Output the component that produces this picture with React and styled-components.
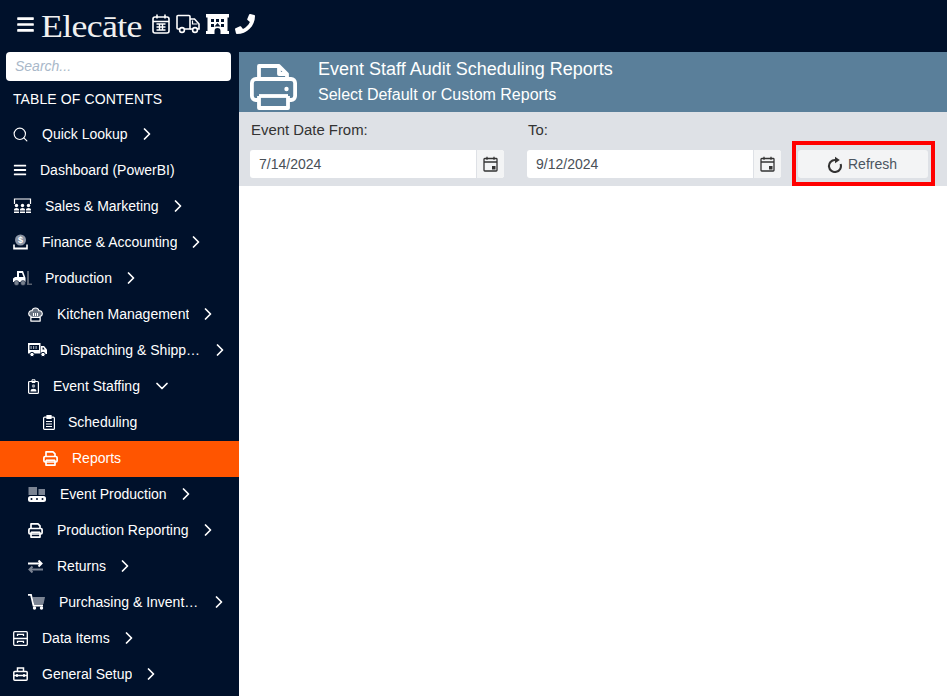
import React from "react";
import styled, { createGlobalStyle } from "styled-components";
import { FaBars, FaPhone } from "react-icons/fa";
import { Search, ChevronRight, ChevronDown } from "lucide-react";

const Navy = "#00112b";

const Global = createGlobalStyle`
  html, body { margin: 0; padding: 0; height: 100%; background: #fff; overflow: hidden; }
  body { font-family: "Liberation Sans", Arial, sans-serif; }
  #root { height: 100%; }
`;

const Page = styled.div`
  width: 947px; height: 696px; display: grid;
  grid-template-columns: 239px 1fr; grid-template-rows: 52px 1fr;
  overflow: hidden; background: #fff;
`;
const TopBar = styled.header`
  grid-column: 1 / 3; background: ${Navy}; color: #fff;
  display: flex; align-items: center; padding: 0 0 4px 16px; box-sizing: border-box;
`;
const MenuBtn = styled.span`display: flex; width: 25px;`;
const Logo = styled.span`
  display: inline-block; font-family: "Liberation Serif", serif; font-size: 32px; letter-spacing: -0.6px;
  width: 111px; line-height: 32px; color: #f0f0f0; margin-top: 3px;
  transform: scaleX(1.12); transform-origin: left center;
`;
const TopIcons = styled.div`display: flex; align-items: center;`;
const TopIcon = styled.span`display: flex; margin-right: ${p => p.$gap}px;`;

const Sidebar = styled.nav`
  background: ${Navy}; color: #fff; display: flex; flex-direction: column; min-height: 0; overflow: hidden;
`;
const SearchBox = styled.div`
  height: 29px; margin: 0 8px 0 6px; background: #fff; border-radius: 4px;
  display: flex; align-items: center; padding: 0 0 2px 9px; box-sizing: border-box;
  font-size: 14px; font-style: italic; color: #a9b8c9; flex: none;
`;
const TocTitle = styled.div`
  height: 36px; line-height: 36px; padding-left: 13px; font-size: 14px; flex: none; letter-spacing: 0.1px;
`;
const Row = styled.div`
  height: 36px; flex: none; display: flex; align-items: center; box-sizing: border-box;
  padding: 0 0 2px ${p => p.$indent}px; font-size: 14px; color: #fff;
  background: ${p => (p.$active ? "#ff5500" : "transparent")};
`;
const IconSlot = styled.span`
  width: ${p => p.$w}px; flex: none; display: flex; align-items: center;
`;
const Label = styled.span`
  white-space: nowrap; overflow: hidden; text-overflow: ellipsis; max-width: 141px;
`;
const Caret = styled.span`display: flex; margin-left: ${p => (p.$open ? 12 : 9)}px;`;

const Main = styled.main`display: flex; flex-direction: column; min-width: 0; background: #fff;`;
const Banner = styled.div`
  height: 60px; background: #5a7f9a; color: #fff; display: flex; align-items: flex-start; padding: 7px 0 0 11px;
  flex: none; box-sizing: border-box;
`;
const BannerIcon = styled.span`display: flex; width: 68px; margin-top: 5px;`;
const BannerText = styled.div`display: flex; flex-direction: column; gap: 4px;`;
const BannerTitle = styled.div`font-size: 18px; line-height: 21px;`;
const BannerSub = styled.div`font-size: 16px; line-height: 21px;`;

const Filters = styled.div`
  height: 74px; background: #dee1e6; display: flex; align-items: flex-end; padding-left: 11px; flex: none;
`;
const Field = styled.div`
  width: 254px; margin-right: 23px; padding-bottom: 8px; color: #333;
`;
const FieldLabel = styled.div`height: 38px; line-height: 36px; font-size: 14.9px; padding-left: 1px;`;
const InputGroup = styled.div`
  height: 28px; display: flex; background: #fff; border-radius: 3px; overflow: hidden; align-items: stretch;
`;
const DateValue = styled.div`flex: 1; padding-left: 9px; line-height: 28px; color: #495057; font-size: 14px;`;
const Addon = styled.div`
  width: 27px; background: #f3f4f5; border-left: 1px solid #dee1e6; display: flex; align-items: center; justify-content: center;
`;
const Highlight = styled.div`
  margin-left: -12px; width: 143px; height: 45px; box-sizing: border-box; border: 4px solid #f00;
  padding: 5px 3px 4px 2px; display: flex;
`;
const RefreshBtn = styled.div`
  flex: 1; background: #f3f4f5; border-radius: 3px; color: #4a5560; font-size: 14px;
  display: flex; align-items: center; justify-content: center; gap: 5px; padding-right: 2px;
`;

const Calendar = () => (
  <svg width="15" height="16" viewBox="0 0 15 16" fill="none" stroke="#333" strokeWidth="1.3">
    <rect x="1" y="2.500" width="13" height="12.500" rx="0.800" />
    <path d="M1 6h13M4 .8v3M11 .8v3" />
    <rect x="9" y="10" width="3.500" height="3.500" fill="#333" stroke="none" />
  </svg>
);
const RefreshIcon = () => (
  <svg width="16" height="17" viewBox="0 0 16 17" fill="none">
    <path d="M8 4A6 6 0 1 0 13.600 8" stroke="#333" strokeWidth="2.100" />
    <path d="M8 .8v6.400l4.800-3.200z" fill="#333" />
  </svg>
);

const TopCalendar = () => (
  <svg width="18" height="20" viewBox="0 0 18 20" fill="none" stroke="#fff" strokeWidth="1.6">
    <rect x="1" y="3" width="16" height="16" rx="2" />
    <path d="M5 .5v4M13 .5v4M1 7.500h16" />
    <path d="M4.500 10h9M4.500 13h9M4.500 16h9M7.500 9.500v7M10.500 9.500v7" strokeWidth="1.400" />
  </svg>
);
const TopTruck = () => (
  <svg width="24" height="20" viewBox="0 0 24 20" fill="none" stroke="#fff" strokeWidth="1.6">
    <path d="M4 15H2a1 1 0 0 1-1-1V2.500a1 1 0 0 1 1-1h11a1 1 0 0 1 1 1V15H8.500" />
    <path d="M14 5h4.500l4.500 5v5h-2M14 15h3" />
    <path d="M16.500 6.500v3.500h5" strokeWidth="1.200" />
    <circle cx="6" cy="16" r="2.400" /><circle cx="19" cy="16" r="2.400" />
  </svg>
);
const TopBuilding = () => (
  <svg width="23" height="20" viewBox="0 0 23 20" fill="#fff">
    <path d="M0 0h23v3.500h-1.500V17H23v3H14.500v-3a3 3 0 0 0-6 0v3H0v-3h1.500V3.500H0z" />
    <g fill={Navy}>
      <rect x="5" y="5" width="3" height="3" /><rect x="10" y="5" width="3" height="3" /><rect x="15" y="5" width="3" height="3" />
      <rect x="5" y="10" width="3" height="3" /><rect x="15" y="10" width="3" height="3" />
      <path d="M11.500 9l3 3.500h-6z" />
    </g>
  </svg>
);

const Sales = () => (
  <svg width="19" height="16" viewBox="0 0 19 16" fill="none" stroke="#fff" strokeWidth="1.200">
    <path d="M1.500 6V1h16v5" />
    <g fill="#fff" stroke="none">
      <circle cx="3.500" cy="7.500" r="1.700" /><circle cx="9.500" cy="7.500" r="1.700" /><circle cx="15.500" cy="7.500" r="1.700" />
      <path d="M1 15v-3.500q0-1.500 2.500-1.500t2.500 1.500V15zM7 15v-3.500q0-1.500 2.500-1.500t2.500 1.500V15zM13 15v-3.500q0-1.500 2.500-1.500t2.500 1.500V15z" />
    </g>
    <path d="M0 13h19" stroke={Navy} strokeWidth="1" />
  </svg>
);
const Finance = () => (
  <svg width="15" height="16" viewBox="0 0 15 16">
    <circle cx="7.500" cy="6" r="5.500" fill="#8b95a5" />
    <text x="7.500" y="9" fontSize="9" fontWeight="700" textAnchor="middle" fill="#fff" fontFamily="Liberation Sans">$</text>
    <path d="M.2 10.500v5h14.600v-5h-1.600v3H1.800v-3z" fill="#fff" />
  </svg>
);
const Forklift = () => (
  <svg width="19" height="16" viewBox="0 0 19 16">
    <path d="M0 8.500l2-1.500h2V1h6l2.500 7v4H0z" fill="#fff" />
    <path d="M6 3h3l1.500 4H6z" fill={Navy} />
    <circle cx="3.500" cy="13" r="2.500" fill="#77808e" stroke={Navy} strokeWidth=".5" />
    <circle cx="10" cy="13" r="2.500" fill="#77808e" stroke={Navy} strokeWidth=".5" />
    <path d="M14 1h2v12.500h3V15h-5z" fill="#59616f" />
  </svg>
);
const ChefIcon = () => (
  <svg width="15" height="15" viewBox="0 0 15 15">
    <path d="M3 9.500C1 9 .5 7.500.8 6 1.200 4 3 3.500 4 3.800 4.500 1.800 6 1 7.500 1s3 .8 3.500 2.800c1-.3 2.800.2 3.200 2.200.3 1.500-.2 3-2.200 3.500V14H3z"
      fill="#6a7482" stroke="#fff" strokeWidth="1.100" />
    <path d="M3 10.300h9M5.500 6v3M7.500 6v3M9.500 6v3" stroke="#fff" strokeWidth="1" fill="none" />
    <rect x="3" y="10.500" width="9" height="3.500" fill={Navy} stroke="#fff" strokeWidth="1" />
  </svg>
);
const DeliveryTruck = () => (
  <svg width="19" height="14" viewBox="0 0 19 14">
    <path d="M0 0h12.500v10.500H0z" fill="#fff" />
    <path d="M1.500 2h9.500v5H1.500z" fill={Navy} />
    <path d="M2.500 3h1.200v3H2.500zM5 3h1.200v3H5zM7.500 3h1.200v3H7.500z" fill="#9ca5b2" />
    <path d="M13 3h3l3 3.500V11h-6z" fill="#fff" />
    <path d="M14.500 4.500h1l1.200 2h-2.200z" fill={Navy} />
    <circle cx="4" cy="11.500" r="2.200" fill="#fff" stroke={Navy} />
    <circle cx="15" cy="11.500" r="2.200" fill="#fff" stroke={Navy} />
  </svg>
);
const Badge = () => (
  <svg width="11" height="15" viewBox="0 0 11 15" fill="none">
    <rect x=".6" y="2.500" width="9.800" height="11.900" rx="1" stroke="#fff" strokeWidth="1.200" />
    <path d="M4 .8h3v2.700H4z" stroke="#fff" strokeWidth="1" />
    <circle cx="5.500" cy="7" r="1.700" fill="#9ca5b2" />
    <path d="M2.500 12.500c0-2 1.200-2.700 3-2.700s3 .7 3 2.700z" fill="#fff" />
  </svg>
);
const ClipboardIcon = () => (
  <svg width="12" height="15" viewBox="0 0 12 15" fill="none" stroke="#fff" strokeWidth="1.200">
    <rect x=".6" y="2.200" width="10.800" height="12.200" rx="1" />
    <path d="M4 .6h4v2.800H4z" fill="#fff" />
    <path d="M3 6.500h6M3 9h6M3 11.500h6" />
  </svg>
);
const PrinterIcon = () => (
  <svg width="15" height="15" viewBox="0 0 15 15" fill="none" stroke="#fff" strokeWidth="1.700" strokeLinejoin="round">
    <path d="M3 5.500V.9h7l2 2v2.600" />
    <rect x=".9" y="5.500" width="13.200" height="5.500" rx="1.200" />
    <path d="M3 9.300v4.800h9V9.300" />
    <path d="M3 9.300h9" />
  </svg>
);
const Conveyor = () => (
  <svg width="18" height="15" viewBox="0 0 18 15">
    <rect x=".5" y="0" width="8.500" height="8" fill="#7b8493" />
    <rect x="10.500" y="2" width="6.500" height="6" fill="#7b8493" />
    <rect x="0" y="9" width="18" height="6" rx="2.500" fill="#fff" />
    <circle cx="3.500" cy="12" r="1" fill={Navy} /><circle cx="9" cy="12" r="1" fill={Navy} /><circle cx="14.500" cy="12" r="1" fill={Navy} />
  </svg>
);
const ReturnsIcon = () => (
  <svg width="15" height="13" viewBox="0 0 15 13" fill="none" strokeWidth="2">
    <path d="M0 3.500h13M10.500.5l3 3-3 3" stroke="#fff" />
    <path d="M15 9.500H2M4.500 6.500l-3 3 3 3" stroke="#7b8493" />
  </svg>
);
const CartIcon = () => (
  <svg width="17" height="16" viewBox="0 0 17 16">
    <path d="M4.500 3H17l-1.500 7H6z" fill="#7b8493" />
    <path d="M0 .9h3l2.500 10.600h9.500" fill="none" stroke="#fff" strokeWidth="1.800" />
    <circle cx="6.500" cy="14" r="1.700" fill="#fff" /><circle cx="13.500" cy="14" r="1.700" fill="#fff" />
  </svg>
);
const Drawers = () => (
  <svg width="15" height="15" viewBox="0 0 15 15" fill="none" stroke="#fff" strokeWidth="1.300">
    <rect x=".7" y=".7" width="13.600" height="13.600" rx="1" />
    <path d="M1 7.500h13M4.500 5V3.300h6V5M4.500 12v-1.700h6V12" />
  </svg>
);
const Toolbox = () => (
  <svg width="15" height="14" viewBox="0 0 15 14" fill="none" stroke="#fff" strokeWidth="1.500">
    <rect x=".8" y="4.500" width="13.400" height="8.700" rx="1" />
    <path d="M4.500 4.500V1h6v3.500M1 8.500h13" />
    <path d="M4 7v3M11 7v3" strokeWidth="1.600" />
  </svg>
);
const BigPrinter = () => (
  <svg width="47" height="46" viewBox="0 0 47 46" fill="none" stroke="#fff" strokeWidth="3.800" strokeLinejoin="round">
    <path d="M9 15V2h20l8 8v5" />
    <path d="M29 2v8h8" />
    <rect x="1.900" y="15" width="43.200" height="21" rx="4" />
    <path d="M9 32v12h29V32" fill="#5a7f9a" />
    <path d="M9 32h29" />
    <circle cx="36.500" cy="25" r="2.200" fill="#fff" stroke="none" />
  </svg>
);

const items = [
  { label: "Quick Lookup", indent: 12, slot: 30, icon: <Search size={17} strokeWidth={1.6} /> },
  { label: "Dashboard (PowerBI)", indent: 13, slot: 27, icon: <FaBars size={14} />, noCaret: true },
  { label: "Sales & Marketing", indent: 13, slot: 32, icon: <Sales /> },
  { label: "Finance & Accounting", indent: 13, slot: 29, icon: <Finance /> },
  { label: "Production", indent: 13, slot: 32, icon: <Forklift /> },
  { label: "Kitchen Management", indent: 28, slot: 29, icon: <ChefIcon /> },
  { label: "Dispatching & Shipping", indent: 28, slot: 32, icon: <DeliveryTruck /> },
  { label: "Event Staffing", indent: 28, slot: 25, icon: <Badge />, open: true },
  { label: "Scheduling", indent: 43, slot: 25, icon: <ClipboardIcon />, noCaret: true },
  { label: "Reports", indent: 43, slot: 29, icon: <PrinterIcon />, noCaret: true, active: true },
  { label: "Event Production", indent: 28, slot: 32, icon: <Conveyor /> },
  { label: "Production Reporting", indent: 28, slot: 29, icon: <PrinterIcon /> },
  { label: "Returns", indent: 28, slot: 29, icon: <ReturnsIcon /> },
  { label: "Purchasing & Inventory", indent: 28, slot: 31, icon: <CartIcon /> },
  { label: "Data Items", indent: 13, slot: 29, icon: <Drawers /> },
  { label: "General Setup", indent: 13, slot: 29, icon: <Toolbox /> },
];

export default function App() {
  return (
    <Page>
      <Global />
      <TopBar>
        <MenuBtn><FaBars size={19} /></MenuBtn>
        <Logo>Elecāte</Logo>
        <TopIcons>
          <TopIcon $gap={6}><TopCalendar /></TopIcon>
          <TopIcon $gap={6}><TopTruck /></TopIcon>
          <TopIcon $gap={6}><TopBuilding /></TopIcon>
          <TopIcon $gap={0}><FaPhone size={20} /></TopIcon>
        </TopIcons>
      </TopBar>
      <Sidebar>
        <SearchBox>Search...</SearchBox>
        <TocTitle>TABLE OF CONTENTS</TocTitle>
        {items.map(it => (
          <Row key={it.label} $indent={it.indent} $active={it.active}>
            <IconSlot $w={it.slot}>{it.icon}</IconSlot>
            <Label>{it.label}</Label>
            {!it.noCaret && (
              <Caret $open={it.open}>{it.open ? <ChevronDown size={20} strokeWidth={2.1} /> : <ChevronRight size={20} strokeWidth={2.1} />}</Caret>
            )}
          </Row>
        ))}
      </Sidebar>
      <Main>
        <Banner>
          <BannerIcon><BigPrinter /></BannerIcon>
          <BannerText>
            <BannerTitle>Event Staff Audit Scheduling Reports</BannerTitle>
            <BannerSub>Select Default or Custom Reports</BannerSub>
          </BannerText>
        </Banner>
        <Filters>
          <Field>
            <FieldLabel>Event Date From:</FieldLabel>
            <InputGroup><DateValue>7/14/2024</DateValue><Addon><Calendar /></Addon></InputGroup>
          </Field>
          <Field>
            <FieldLabel>To:</FieldLabel>
            <InputGroup><DateValue>9/12/2024</DateValue><Addon><Calendar /></Addon></InputGroup>
          </Field>
          <Highlight>
            <RefreshBtn><RefreshIcon />Refresh</RefreshBtn>
          </Highlight>
        </Filters>
      </Main>
    </Page>
  );
}
